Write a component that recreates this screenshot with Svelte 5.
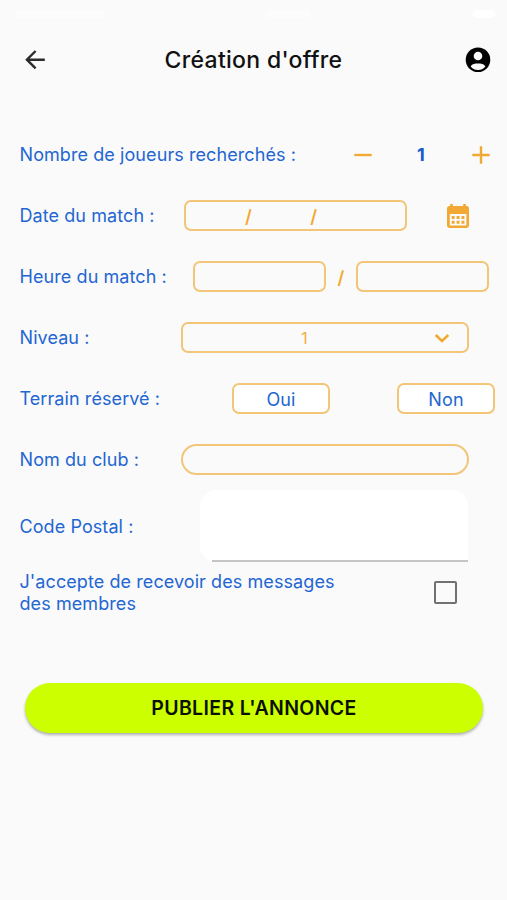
<script>
  let players = $state(1);
  let level = $state('1');
  let reserved = $state('');
  let club = $state('');
  let postcode = $state('');
  let accepted = $state(false);
</script>

<div class="page">
  <div class="status">
    <span class="carrier"></span>
    <span class="clock"></span>
    <span class="battery"></span>
  </div>

  <header class="app-header">
    <button class="icon-button" aria-label="Retour">
      <svg width="22" height="22" viewBox="0 0 22 22">
        <path d="M20.800 10.700H3M11.600 2L2.900 10.700l8.700 8.700" fill="none" stroke="#2b2b2b" stroke-width="2.4" />
      </svg>
    </button>
    <h1>Création d'offre</h1>
    <button class="icon-button" aria-label="Profil">
      <svg width="26" height="26" viewBox="0 0 26 26">
        <circle cx="13" cy="12.700" r="12.3" fill="#000" />
        <circle cx="13" cy="9" r="4.3" fill="#fafafa" />
        <path d="M5.6 19.4C7.200 16.9 10 16.6 13 16.6s5.800 .3 7.400 2.8C18.500 21.800 16 22.900 13 22.900S7.500 21.800 5.600 19.400z" fill="#fafafa" />
      </svg>
    </button>
  </header>

  <main>
    <div class="row">
      <span class="label">Nombre de joueurs recherchés :</span>
      <div class="stepper">
        <button class="icon-button" aria-label="Moins" onclick={() => players > 1 && players--}>
          <svg width="18" height="18" viewBox="0 0 18 18"><path d="M.3 9h17.400" stroke="#f1a933" stroke-width="2.4" /></svg>
        </button>
        <b>{players}</b>
        <button class="icon-button" aria-label="Plus" onclick={() => players++}>
          <svg width="18" height="18" viewBox="0 0 18 18"><path d="M.3 9h17.400M9 .3v17.400" stroke="#f1a933" stroke-width="2.4" /></svg>
        </button>
      </div>
    </div>

    <div class="row">
      <span class="label">Date du match :</span>
      <div class="field date"><span class="slash">/</span><span class="slash">/</span></div>
      <button class="icon-button calendar" aria-label="Calendrier">
        <svg width="24" height="26" viewBox="0 0 24 26">
          <path fill="#f1a933" fill-rule="evenodd" d="M4.200 1h2.600v2h10.400V1h2.600v2h.7Q23 3 23 5.600v17Q23 25 20.500 25h-17Q1 25 1 22.600v-17Q1 3 3.500 3h.7zM3.800 11v11.500h16.600V11z" />
          <path d="M5.700 14.500h12.900M5.700 19.200h12.900" stroke="#f1a933" stroke-width="2.900" stroke-dasharray="2.900 2" />
        </svg>
      </button>
    </div>

    <div class="row">
      <span class="label">Heure du match :</span>
      <div class="times">
        <div class="field time"></div>
        <span class="slash">/</span>
        <div class="field time"></div>
      </div>
    </div>

    <div class="row">
      <span class="label">Niveau :</span>
      <div class="field wide level">
        <span>{level}</span>
        <svg width="16" height="10" viewBox="0 0 16 10"><path d="M1.700 2l6.300 6 6.300-6" fill="none" stroke="#f1a933" stroke-width="2.600" /></svg>
      </div>
    </div>

    <div class="row">
      <span class="label">Terrain réservé :</span>
      <div class="choices">
        <button class="field choice" onclick={() => reserved = 'oui'}>Oui</button>
        <button class="field choice" onclick={() => reserved = 'non'}>Non</button>
      </div>
    </div>

    <div class="row">
      <span class="label">Nom du club :</span>
      <input class="field wide club" bind:value={club} aria-label="Nom du club" />
    </div>

    <div class="row postal">
      <span class="label">Code Postal :</span>
      <div class="postcode"><input bind:value={postcode} aria-label="Code Postal" /></div>
    </div>

    <div class="row accept">
      <span class="label">J'accepte de recevoir des messages<br />des membres</span>
      <input type="checkbox" bind:checked={accepted} aria-label="J'accepte" />
    </div>

    <button class="publish">PUBLIER L'ANNONCE</button>
  </main>
</div>

<style>
  :global(body) {
    background: #fafafa;
  }
  .page {
    height: 900px;
    overflow: hidden;
    background: #fafafa;
    font-family: Inter, sans-serif;
    color: #2366d2;
  }
  .page * {
    box-sizing: border-box;
  }
  button,
  input {
    margin: 0;
    font: inherit;
    color: inherit;
  }
  svg {
    display: block;
  }
  .status {
    height: 27px;
    padding: 0 12px 0 16px;
    display: flex;
    align-items: center;
    justify-content: space-between;
  }
  .status span {
    height: 8px;
    border-radius: 4px;
    background: #fcfcfc;
  }
  .carrier {
    width: 88px;
  }
  .clock {
    width: 45px;
  }
  .status .battery {
    width: 22px;
    background: #fff;
  }
  .app-header {
    height: 65px;
    padding: 0 16px 0 24px;
    display: flex;
    align-items: center;
    justify-content: space-between;
  }
  h1 {
    margin: 0 4px 0 0;
    font-size: 23px;
    font-weight: 500;
    letter-spacing: 0.3px;
    color: #111;
  }
  .icon-button {
    padding: 0;
    border: none;
    background: none;
  }
  main {
    padding-top: 32px;
  }
  .row {
    height: 61px;
    padding-left: 19.500px;
    display: flex;
    align-items: center;
    justify-content: space-between;
  }
  .label {
    padding-top: 1px;
    font-size: 18px;
    line-height: 22px;
    letter-spacing: 0.08px;
    white-space: nowrap;
  }
  .stepper {
    width: 136px;
    margin-right: 17px;
    display: flex;
    align-items: center;
    justify-content: space-between;
  }
  .stepper b {
    margin-right: 2px;
    font-size: 18px;
    font-weight: 700;
    color: #145ccc;
  }
  .field {
    height: 31px;
    padding: 0;
    border: 2px solid #f3c578;
    border-radius: 7px;
    background: transparent;
  }
  .slash {
    padding-top: 1px;
    font-size: 18px;
    font-weight: 600;
    color: #f1a933;
  }
  .date {
    width: 223px;
    margin-left: auto;
    padding: 0 88px 0 59px;
    display: flex;
    align-items: center;
    justify-content: space-between;
  }
  .calendar {
    margin: 0 37px 0 39px;
  }
  .times {
    width: 296px;
    margin-right: 18px;
    display: flex;
    align-items: center;
    justify-content: space-between;
  }
  .time {
    width: 133px;
  }
  .wide {
    width: 288px;
    margin-right: 38px;
  }
  .level {
    padding: 0 17px 0 118px;
    display: flex;
    align-items: center;
    justify-content: space-between;
    font-size: 16.5px;
    color: #f1b048;
  }
  .choices {
    width: 263px;
    margin-right: 12px;
    display: flex;
    justify-content: space-between;
  }
  .choice {
    width: 98px;
    padding-top: 1px;
    background: #fff;
    font-size: 18px;
    letter-spacing: 0.1px;
  }
  .club {
    border-radius: 16px;
  }
  .postal {
    height: 72px;
  }
  .postcode {
    width: 268px;
    height: 72px;
    margin-right: 39px;
    padding-left: 12px;
    border-radius: 16px 16px 0 16px;
    background: #fff;
  }
  .postcode input {
    width: 100%;
    height: 100%;
    padding: 0;
    border: none;
    border-bottom: 2px solid #c5c5c5;
    background: none;
  }
  .accept {
    height: 60px;
  }
  .accept input {
    appearance: none;
    width: 23px;
    height: 23px;
    margin-right: 50px;
    border: 2px solid #717171;
    border-radius: 2px;
  }
  .publish {
    display: block;
    width: 458px;
    height: 50px;
    margin: 61px auto 0 25px;
    border: none;
    border-radius: 25px;
    background: #cf0;
    box-shadow: 0 2px 3px rgba(0, 0, 0, 0.3);
    font-size: 19.5px;
    font-weight: 600;
    letter-spacing: 0.35px;
    color: #0b1000;
  }
</style>
